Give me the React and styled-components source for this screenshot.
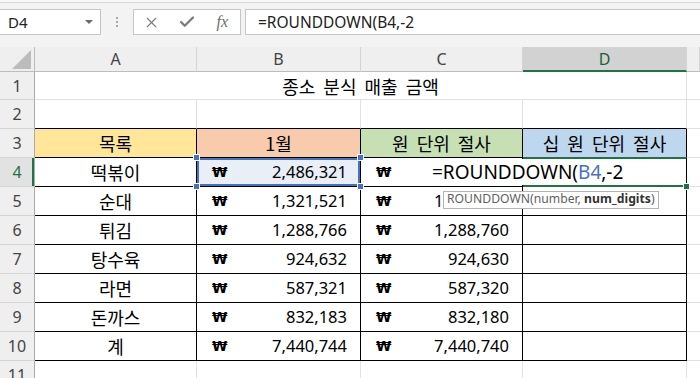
import styled, { createGlobalStyle } from "styled-components"
import { X, Check } from "lucide-react"

const INK = "#000"
const GRID = "#e1e1e1"
const GREEN = "#217346"
const BLUE = "#4472c4"

const GlobalStyle = createGlobalStyle`
    body {
        margin: 0;
        background: #fff;
        font-family: "Noto Sans", "Noto Sans CJK KR", sans-serif;
    }
`

const items = [
    ["떡볶이", "2,486,321", "2,486,320"],
    ["순대", "1,321,521", "1,321,520"],
    ["튀김", "1,288,766", "1,288,760"],
    ["탕수육", "924,632", "924,630"],
    ["라면", "587,321", "587,320"],
    ["돈까스", "832,183", "832,180"],
    ["계", "7,440,744", "7,440,740"],
]

const heads = [
    ["목록", "#ffe699"],
    ["1월", "#f8cbad"],
    ["원 단위 절사", "#c6e0b4"],
    ["십 원 단위 절사", "#bdd7ee"],
]

function Money({ value }) {
    return (
        <>
            <Won>₩</Won>
            <Amount>{value}</Amount>
        </>
    )
}

export default function App() {
    return (
        <Page>
            <GlobalStyle />
            <Toolbar>
                <NameBox>
                    <span>D4</span>
                    <DropArrow />
                </NameBox>
                <Grip>
                    <i /><i /><i />
                </Grip>
                <ButtonGroup>
                    <IconSlot><X size={17} strokeWidth={1.6} /></IconSlot>
                    <IconSlot><Check size={18} strokeWidth={3} /></IconSlot>
                    <IconSlot><FxLabel>fx</FxLabel></IconSlot>
                </ButtonGroup>
                <FormulaInput>=ROUNDDOWN(B4,-2</FormulaInput>
            </Toolbar>

            <Sheet>
                <Corner>
                    <svg width="35" height="25" viewBox="0 0 35 25">
                        <polygon points="12,22 31,22 31,3" fill="#bcbcbc" />
                    </svg>
                </Corner>
                {["A", "B", "C", "D"].map((c) => (
                    <ColHead key={c} $active={c === "D"}>{c}</ColHead>
                ))}
                <ColHead />

                <RowHead>1</RowHead>
                <Cell $span={4} $r={GRID} $b={GRID} $align="center">
                    <Label>종소 분식 매출 금액</Label>
                </Cell>
                <Cell $r="transparent" $b={GRID} />

                <RowHead>2</RowHead>
                {[0, 1, 2, 3].map((i) => (
                    <Cell key={i} $r={GRID} $b={INK} />
                ))}
                <Cell $r="transparent" $b={GRID} />

                <RowHead>3</RowHead>
                {heads.map(([t, fill]) => (
                    <Cell key={t} $fill={fill} $r={INK} $b={INK} $align="center">
                        <Label>{t}</Label>
                    </Cell>
                ))}
                <Cell $r="transparent" $b={GRID} />

                {items.map(([name, b, c], i) => {
                    const first = i === 0
                    return [
                        <RowHead key={"h" + i} $active={first}>{i + 4}</RowHead>,
                        <Cell key={"a" + i} $r={INK} $b={INK} $align="center">
                            <Label>{name}</Label>
                        </Cell>,
                        first ? (
                            <RefCell key={"b" + i} $r={INK} $b={INK}>
                                <Money value={b} />
                                <Knob $x="left" $y="top" />
                                <Knob $x="right" $y="top" />
                                <Knob $x="left" $y="bottom" />
                                <Knob $x="right" $y="bottom" />
                            </RefCell>
                        ) : (
                            <Cell key={"b" + i} $r={INK} $b={INK}>
                                <Money value={b} />
                            </Cell>
                        ),
                        <Cell key={"c" + i} $r={INK} $b={INK}>
                            <Money value={c} />
                        </Cell>,
                        first ? (
                            <ActiveCell key={"d" + i} $r={INK} $b={GREEN}>
                                <Editor>
                                    =ROUNDDOWN(<RefText>B4</RefText>,-2
                                </Editor>
                                <FillHandle />
                                <Tip>
                                    ROUNDDOWN(number, <b>num_digits</b>)
                                </Tip>
                            </ActiveCell>
                        ) : (
                            <Cell key={"d" + i} $r={INK} $b={INK} />
                        ),
                        <Cell key={"e" + i} $r="transparent" $b={GRID} />,
                    ]
                })}

                <RowHead>11</RowHead>
                {[0, 1, 2, 3].map((i) => (
                    <Cell key={i} $r={GRID} $b={GRID} />
                ))}
                <Cell $r="transparent" $b={GRID} />
            </Sheet>
        </Page>
    )
}

const Page = styled.div`
    width: 700px;
    height: 378px;
    overflow: hidden;
    background: #fff;
`
const Toolbar = styled.div`
    height: 47px;
    box-sizing: border-box;
    padding-top: 9px;
    display: flex;
    align-items: flex-start;
    background: linear-gradient(#f7f7f7 0 2px, #d9d9d9 2px 3px, #f3f3f3 3px);
`
const NameBox = styled.div`
    width: 101px;
    height: 26px;
    box-sizing: border-box;
    background: #fff;
    border: 1px solid #c6c6c6;
    border-left: none;
    display: flex;
    align-items: center;
    justify-content: space-between;
    padding: 0 7px 0 8px;
    font-size: 15px;
    color: #222;
`
const DropArrow = styled.div`
    width: 0;
    height: 0;
    border-left: 4px solid transparent;
    border-right: 4px solid transparent;
    border-top: 4px solid #6a6a6a;
`
const Grip = styled.div`
    width: 32px;
    height: 26px;
    display: flex;
    flex-direction: column;
    align-items: center;
    justify-content: center;
    gap: 2px;

    i {
        width: 2px;
        height: 2px;
        background: #a8a8a8;
    }
`
const ButtonGroup = styled.div`
    width: 108px;
    height: 26px;
    box-sizing: border-box;
    background: #fff;
    border: 1px solid #c6c6c6;
    display: flex;
    align-items: center;
    color: #7a7a7a;
`
const IconSlot = styled.div`
    width: 36px;
    display: flex;
    justify-content: center;
    align-items: center;
`
const FxLabel = styled.span`
    font-family: "Liberation Serif", serif;
    font-style: italic;
    font-size: 16px;
    color: #6d6d6d;
`
const FormulaInput = styled.div`
    flex: 1;
    height: 26px;
    margin-left: 4px;
    box-sizing: border-box;
    background: #fff;
    border: 1px solid #c6c6c6;
    border-right: none;
    display: flex;
    align-items: center;
    padding-left: 12px;
    font-size: 15.5px;
    color: #222;
`
const Sheet = styled.div`
    display: grid;
    grid-template-columns: 35px 162px 164px 162px 164px 13px;
    grid-template-rows: 25px 28px repeat(10, 29px);
`
const Corner = styled.div`
    background: #efefef;
    border-right: 1px solid #bdbdbd;
    border-bottom: 1px solid #bdbdbd;
    box-sizing: border-box;

    svg {
        display: block;
    }
`
const ColHead = styled.div`
    box-sizing: border-box;
    background: ${(p) => (p.$active ? "#d2d2d2" : "#efefef")};
    border-right: 1px solid #d4d4d4;
    border-bottom: ${(p) => (p.$active ? `2px solid ${GREEN}` : "1px solid #bdbdbd")};
    color: ${(p) => (p.$active ? "#1d5e3a" : "#444")};
    font-size: 16px;
    display: flex;
    align-items: center;
    justify-content: center;
    line-height: 1;
`
const RowHead = styled.div`
    box-sizing: border-box;
    background: ${(p) => (p.$active ? "#e2e2e2" : "#efefef")};
    border-right: 1px solid #ababab;
    border-bottom: 1px solid #d4d4d4;
    box-shadow: ${(p) => (p.$active ? `inset -2px 0 0 ${GREEN}` : "none")};
    color: ${(p) => (p.$active ? GREEN : "#444")};
    font-size: 16px;
    display: flex;
    align-items: center;
    justify-content: center;
    line-height: 1;
`
const Cell = styled.div`
    box-sizing: border-box;
    grid-column: ${(p) => (p.$span ? `span ${p.$span}` : "auto")};
    background: ${(p) => p.$fill || "#fff"};
    border-right: 1px solid ${(p) => p.$r};
    border-bottom: 1px solid ${(p) => p.$b};
    display: flex;
    align-items: center;
    justify-content: ${(p) => (p.$align === "center" ? "center" : "space-between")};
    padding: ${(p) => (p.$align === "center" ? "0" : "0 13px 0 15px")};
    color: #000;
    line-height: 1;
    min-width: 0;
`
const RefCell = styled(Cell)`
    position: relative;
    background: #e9eef7;
    box-shadow: inset 0 0 0 2px ${BLUE};
`
const Knob = styled.div`
    position: absolute;
    width: 5px;
    height: 5px;
    background: ${BLUE};
    border: 1px solid #fff;
    ${(p) => p.$x}: -4px;
    ${(p) => p.$y}: -4px;
`
const ActiveCell = styled(Cell)`
    position: relative;
    z-index: 3;
    box-shadow: inset 0 1px 0 ${GREEN}, inset 0 -1px 0 ${GREEN};

    &::before {
        content: "";
        position: absolute;
        top: -1px;
        left: 0;
        right: -1px;
        height: 1px;
        background: ${GREEN};
    }
`
const Editor = styled.div`
    position: absolute;
    top: 1px;
    bottom: 1px;
    left: -95px;
    right: 0;
    background: #fff;
    display: flex;
    align-items: center;
    padding-left: 4px;
    font-size: 19px;
    color: #000;
    white-space: nowrap;
`
const RefText = styled.span`
    color: ${BLUE};
`
const FillHandle = styled.div`
    position: absolute;
    right: -4px;
    bottom: -4px;
    width: 5px;
    height: 5px;
    background: ${GREEN};
    border: 1px solid #fff;
`
const Tip = styled.div`
    position: absolute;
    top: 33px;
    left: -80px;
    white-space: nowrap;
    background: #fff;
    border: 1px solid #b3b3b3;
    padding: 1px 3px 2px;
    font-size: 12.2px;
    color: #5f5f5f;
    line-height: 1.05;

    b {
        color: #333;
    }
`
const Won = styled.span`
    font-family: "DejaVu Sans", sans-serif;
    font-size: 14px;
    font-weight: 700;
`
const Amount = styled.span`
    font-size: 16.5px;
`
const Label = styled.span`
    font-family: "Noto Sans CJK KR", sans-serif;
    font-size: 18px;
    word-spacing: 4px;
    white-space: nowrap;
`
